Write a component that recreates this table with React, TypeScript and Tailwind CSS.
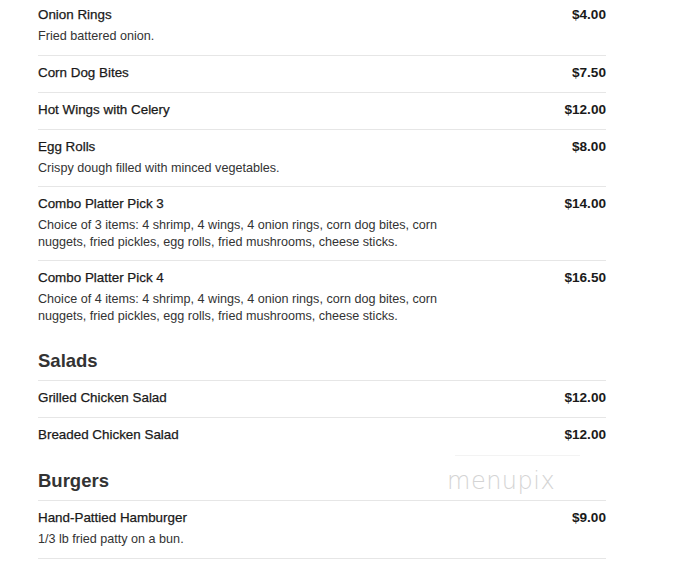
import React from 'react';

interface MenuItem {
  name: string;
  price: string;
  desc?: string[];
}

interface MenuSection {
  title?: string;
  items: MenuItem[];
}

const sections: MenuSection[] = [
  {
    items: [
      { name: 'Onion Rings', price: '$4.00', desc: ['Fried battered onion.'] },
      { name: 'Corn Dog Bites', price: '$7.50' },
      { name: 'Hot Wings with Celery', price: '$12.00' },
      { name: 'Egg Rolls', price: '$8.00', desc: ['Crispy dough filled with minced vegetables.'] },
      {
        name: 'Combo Platter Pick 3',
        price: '$14.00',
        desc: [
          'Choice of 3 items: 4 shrimp, 4 wings, 4 onion rings, corn dog bites, corn',
          'nuggets, fried pickles, egg rolls, fried mushrooms, cheese sticks.',
        ],
      },
      {
        name: 'Combo Platter Pick 4',
        price: '$16.50',
        desc: [
          'Choice of 4 items: 4 shrimp, 4 wings, 4 onion rings, corn dog bites, corn',
          'nuggets, fried pickles, egg rolls, fried mushrooms, cheese sticks.',
        ],
      },
    ],
  },
  {
    title: 'Salads',
    items: [
      { name: 'Grilled Chicken Salad', price: '$12.00' },
      { name: 'Breaded Chicken Salad', price: '$12.00' },
    ],
  },
  {
    title: 'Burgers',
    items: [
      { name: 'Hand-Pattied Hamburger', price: '$9.00', desc: ['1/3 lb fried patty on a bun.'] },
    ],
  },
];

function Row({ item, last }: { item: MenuItem; last: boolean }) {
  return (
    <div
      className={
        'flex justify-between pt-2 pb-[10px] ' + (last ? '' : 'border-b border-[#e6e6e6]')
      }
    >
      <div>
        <div className="text-[13.4px] leading-[18px] text-[#1a1a1a] [-webkit-text-stroke:0.25px_#1a1a1a]">
          {item.name}
        </div>
        {item.desc && (
          <div className="mt-1 text-[12.6px] leading-[16.5px] text-[#333]">
            {item.desc.map((line) => (
              <div key={line}>{line}</div>
            ))}
          </div>
        )}
      </div>
      <div className="text-[13.6px] leading-[18px] font-bold text-[#1a1a1a]">{item.price}</div>
    </div>
  );
}

export default function App() {
  return (
    <div
      className="relative min-h-[564px] bg-white overflow-hidden"
      style={{ fontFamily: '"Liberation Sans", Arial, sans-serif' }}
    >
      <div className="ml-[38px] w-[568px] -mt-[2px]">
        {sections.map((section, si) => (
          <div key={si}>
            {section.title && (
              <h2 className="mt-[17px] pb-[9px] border-b border-[#e6e6e6] text-[18.5px] leading-5 font-bold text-[#333]">
                {section.title}
              </h2>
            )}
            {section.items.map((item, i) => (
              <Row
                key={item.name}
                item={item}
                last={i === section.items.length - 1 && si < sections.length - 1}
              />
            ))}
          </div>
        ))}
      </div>

      {/* watermark */}
      <div className="absolute left-[455px] top-[455px] w-[125px] border-t border-[#f3f3f3]" />
      <div
        className="absolute left-[447px] top-[466px] text-[24px] leading-[30px] font-extralight text-[#d4d4d4] tracking-[0.5px]"
        style={{ fontFamily: '"DejaVu Sans", sans-serif' }}
      >
        menupix
      </div>
    </div>
  );
}
